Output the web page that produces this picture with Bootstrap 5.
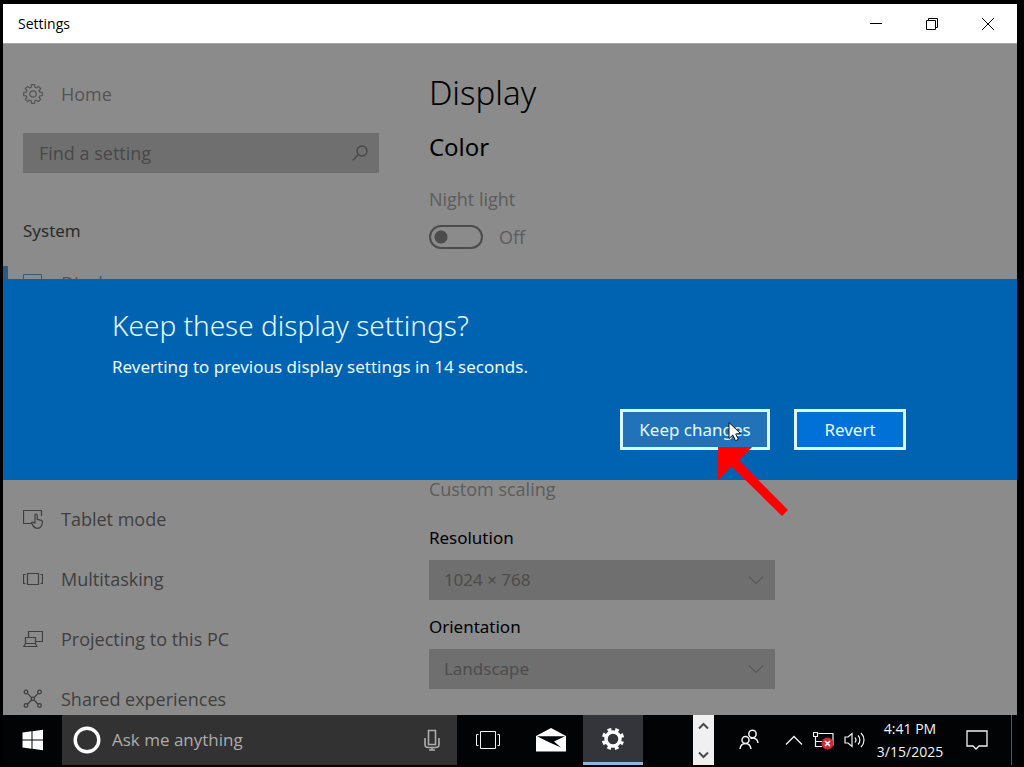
<!DOCTYPE html>
<html lang="en">
<head>
<meta charset="utf-8">
<meta name="viewport" content="width=device-width, initial-scale=1">
<title>Settings</title>
<link href="https://cdn.jsdelivr.net/npm/bootstrap@5.3.0/dist/css/bootstrap.min.css" rel="stylesheet">
<style>
  body { background: #000; color: #2b2b2b; font-family: "Noto Sans", "Open Sans", sans-serif; font-size: 17px; line-height: 24px; }
  .desktop { padding: 4px 7px 2px 3px; }
  svg { display: block; fill: none; stroke: currentColor; flex: none; }
  svg.solid { stroke: none; }
  button { border: 0; background: none; color: inherit; padding: 0; }

  .titlebar { height: 39px; padding: 0 1px 0 15px; background: #fff; color: #000; font-size: 14px; font-family: "Open Sans", sans-serif; }
  .titlebar button { width: 56px; height: 39px; display: grid; place-items: center; }

  .pane-area { background: #8b8b8b; border-top: 1px solid #a8a8a8; min-height: 0; }
  .sidebar { flex: 0 0 42%; padding: 34px 50px 0 20px; }
  .side-link, .find-box, .dimmed { font-family: "Open Sans", sans-serif; font-size: 18px; }
  .side-link { display: flex; align-items: center; gap: 18px; height: 60px; color: #3f3f3f; text-decoration: none; }
  .home-link { height: 32px; color: #545454; }
  .find-box { margin-top: 23px; background: #6f6f6f; height: 40px; padding: 0 11px 0 16px; color: #484848; }
  .bare-input { border: 0; background: none; padding: 0; color: inherit; min-width: 0; outline: 0; }
  .bare-input::placeholder { color: inherit; opacity: 1; }
  .group-title { margin: 46px 0 0; font-size: 17px; line-height: 24px; font-weight: 400; color: #2b2b2b; }
  .current-link { margin: 10px 0 0 -20px; padding-left: 20px; position: relative; color: #2f5a80; }
  .current-link::before { content: ""; position: absolute; left: 0; top: 13px; width: 5px; height: 34px; background: #2f5a80; }
  .lower-links { margin-top: 176px; }

  .content-pane { padding-top: 26px; }
  .content-pane h1 { font-size: 33px; line-height: 46px; font-weight: 300; color: #000; margin: 0; }
  .content-pane h2 { font-size: 24px; line-height: 32px; font-weight: 400; color: #000; margin: 15px 0 24px; }
  .dimmed { color: #5c5c5c; }
  .switch-row { margin: 13px 0 0; }
  .night-switch.form-check-input { width: 54px; height: 24px; margin: 0; border: 2px solid #4c4c4c; border-radius: 12px; opacity: 1;
    background: radial-gradient(circle at 10px 10px, #4c4c4c 6px, transparent 7px); }
  .scaling-link { display: block; margin-top: 228px; text-decoration: none; }
  .field-label { display: block; color: #000; line-height: 24px; margin-bottom: 10px; }
  .field { width: 346px; max-width: 100%; margin-top: 25px; }
  .field + .field { margin-top: 15px; }
  .field .form-select { height: 40px; border: 0; border-radius: 0; padding: 0 40px 0 15px; font-size: 17px; color: #4c4c4c; background-color: #6f6f6f; opacity: 1;
    background-image: url("data:image/svg+xml,%3Csvg xmlns='http://www.w3.org/2000/svg' viewBox='0 0 16 16'%3E%3Cpath d='M1 4.500l7 7 7-7' fill='none' stroke='%23484848'/%3E%3C/svg%3E");
    background-size: 16px 16px; background-position: right 11px center; }

  .dialog-layer { inset: 0; }
  .confirm-band { background: #0063b1; color: #e6fbff; min-height: 201px; padding: 28px 111px 30px 109px; }
  .confirm-band h2 { font-size: 28px; line-height: 36px; font-weight: 300; margin: 0 0 12px; }
  .choice-row { margin-top: 30px; }
  .choice { display: block; height: 41px; border: 3px solid #dcf8ff; border-radius: 0; color: #e6fbff; font-size: 17px; line-height: 24px; padding: 0; }
  .choice:hover, .choice:focus { border-color: #dcf8ff; color: #fff; }
  .choice-keep { width: 150px; background: #2272b9; }
  .choice-revert { width: 112px; background: #0071d6; }
  .pointer-art { left: 98px; top: 12px; pointer-events: none; z-index: 2; }

  .taskbar { height: 50px; background: #020305; color: #f2f2f2; font-family: "Open Sans", sans-serif; }
  .taskbar > button { height: 50px; display: grid; place-items: center; }
  .ask-box { flex: 0 0 39%; background: #323232; color: #adadad; padding: 0 16px 0 10px; }
  .ask-box .bare-input { margin-left: 10px; }
  .app-active { width: 60px; background: #33353a; border-bottom: 3px solid #8fb5dd; }
  .mini-scroll { width: 21px; background: #f0f0f0; color: #4a4a4a; padding: 7px 0 6px; }
  .clock { font-size: 14px; line-height: 23px; width: 80px; }
  .show-desk { width: 6px; margin-left: 11px; border-left: 1px solid #55585c; }
  .w-start { width: 59px; } .w-view { width: 62px; } .w-mail { width: 64px; } .w-people { width: 70px; }
  .w-more { width: 20px; } .w-net { width: 40px; } .w-vol { width: 22px; } .w-note { width: 46px; }
</style>
</head>
<body>
<div class="desktop vh-100 d-flex flex-column overflow-hidden">
  <header class="titlebar d-flex align-items-center">
    <span class="me-auto">Settings</span>
    <button type="button" aria-label="Minimize"><svg width="14" height="14" viewBox="0 0 14 14"><path d="M1 6.500h12"/></svg></button>
    <button type="button" aria-label="Restore"><svg width="14" height="14" viewBox="0 0 14 14"><path d="M1.500 3.500h9v9h-9zM3.500 3.500v-2h9v9h-2"/></svg></button>
    <button type="button" aria-label="Close"><svg width="14" height="14" viewBox="0 0 14 14"><path d="M1 1l12 12M13 1L1 13"/></svg></button>
  </header>

  <div class="pane-area flex-grow-1 d-flex position-relative overflow-hidden">
    <nav class="sidebar" aria-label="Settings categories">
      <a class="side-link home-link" href="#">
        <svg width="20" height="20" viewBox="0 0 20 20" stroke-width="1.200" stroke-linejoin="round"><circle cx="10" cy="10" r="3.200"/><path d="M8.200 3.200 8.400.7h3.200l.2 2.500 1.700.7 1.900-1.600 2.300 2.300-1.600 1.900.7 1.700 2.500.2v3.200l-2.500.2-.7 1.700 1.600 1.900-2.300 2.300-1.900-1.600-1.700.7-.2 2.500H8.400l-.2-2.500-1.700-.7-1.900 1.600-2.300-2.300 1.600-1.900-.7-1.700-2.500-.2V8.400l2.500-.2.7-1.700-1.600-1.900 2.300-2.300 1.900 1.600z"/></svg>
        Home</a>
      <div class="find-box d-flex align-items-center">
        <input class="bare-input flex-grow-1" type="text" placeholder="Find a setting" aria-label="Find a setting">
        <svg width="16" height="16" viewBox="0 0 16 16" stroke-width="1.400"><circle cx="10" cy="6" r="5"/><path d="M6.400 9.600.8 15.200"/></svg>
      </div>
      <h2 class="group-title">System</h2>
      <a class="side-link current-link" href="#" aria-current="page">
        <svg width="20" height="20" viewBox="0 0 20 20"><path d="M.5 1.500h18v12H.5zM9.500 13.500v4M5 17.500h9"/></svg>
        Display</a>
      <div class="lower-links">
        <a class="side-link" href="#">
          <svg width="20" height="20" viewBox="0 0 20 20" stroke-width="1.200"><path d="M8.500 14.500h-8v-13h18v5.500M12 14V6.200c0-1.600 2.200-1.600 2.200 0v4.200l3.600.7c1.200.3 1.700 1 1.600 2.200-.2 3-1 6-5 6-2.600 0-3.600-1.200-4.800-3.400l-1.200-2c.7-1 1.700-.8 2.400-.2z"/></svg>
          Tablet mode</a>
        <a class="side-link" href="#">
          <svg width="20" height="20" viewBox="0 0 20 20" stroke-width="1.200"><path d="M4.500 4.500h11v11h-11zM2.500 5.500h-2v9h2M17.500 5.500h2v9h-2"/></svg>
          Multitasking</a>
        <a class="side-link" href="#">
          <svg width="20" height="20" viewBox="0 0 20 20" stroke-width="1.200"><path d="M5.500 8V2.500h14v10h-7M2.500 15V8.500h10V15M2.500 14.500.8 17.500h13l-1.500-3z"/></svg>
          Projecting to this PC</a>
        <a class="side-link" href="#">
          <svg width="20" height="20" viewBox="0 0 20 20" stroke-width="1.300"><circle cx="3" cy="3" r="1.800"/><circle cx="16.500" cy="3" r="1.800"/><circle cx="3" cy="16.500" r="1.800"/><circle cx="16.500" cy="16.500" r="1.800"/><circle cx="9.800" cy="9.800" r="1.600"/><path d="M4.400 4.400l4.200 4.200M15.200 4.400 11 8.600M4.400 15.200l4.200-4.200M15.200 15.200 11 11"/></svg>
          Shared experiences</a>
      </div>
    </nav>

    <main class="content-pane flex-grow-1">
      <h1>Display</h1>
      <h2>Color</h2>
      <label class="dimmed" for="night">Night light</label>
      <div class="switch-row d-flex align-items-center gap-3 dimmed">
        <input class="form-check-input night-switch" type="checkbox" role="switch" id="night" disabled>
        <span>Off</span>
      </div>
      <a class="scaling-link dimmed" href="#">Custom scaling</a>
      <div class="field">
        <label class="field-label" for="res">Resolution</label>
        <select class="form-select" id="res" disabled><option>1024 × 768</option></select>
      </div>
      <div class="field">
        <label class="field-label" for="orient">Orientation</label>
        <select class="form-select" id="orient" disabled><option>Landscape</option></select>
      </div>
    </main>

    <div class="dialog-layer position-absolute d-flex align-items-center">
      <section class="confirm-band w-100" role="dialog" aria-labelledby="confirm-title">
        <h2 id="confirm-title">Keep these display settings?</h2>
        <p class="m-0">Reverting to previous display settings in 14 seconds.</p>
        <div class="choice-row d-flex justify-content-end gap-4">
          <div class="position-relative">
            <button type="button" class="btn choice choice-keep">Keep changes</button>
            <svg class="solid pointer-art position-absolute" width="72" height="96" viewBox="0 0 72 96" aria-hidden="true">
              <path fill="#fff" stroke="#111" d="M11 1.500v16l3.800-3.400 2.700 5.600 2.900-1.400-2.700-5.300 4.900-.4z"/>
              <path fill="#f00" d="M0 26h34L21 39.500l49 49.500-6 6-50.500-49.500L0 59z"/>
            </svg>
          </div>
          <button type="button" class="btn choice choice-revert">Revert</button>
        </div>
      </section>
    </div>
  </div>

  <footer class="taskbar d-flex align-items-stretch">
    <button type="button" class="w-start" aria-label="Start"><svg class="solid" width="22" height="22" viewBox="0 0 22 22"><path fill="#fff" d="M.5 3.500l9-1.200v8.200h-9zM10.500 2.200 21 .8v9.700H10.500zM.5 11.500h9v8.200l-9-1.200zM10.500 11.500H21v9.700l-10.500-1.400z"/></svg></button>
    <div class="ask-box d-flex align-items-center">
      <svg width="30" height="30" viewBox="0 0 30 30"><circle cx="15" cy="15" r="11.800" stroke="#fff" stroke-width="3.400"/></svg>
      <input class="bare-input flex-grow-1" type="text" placeholder="Ask me anything" aria-label="Ask me anything">
      <svg width="18" height="22" viewBox="0 0 18 22" stroke-width="1.600"><path d="M5.500 1.500h7v14h-7zM2 9v6.500c0 2 1.500 3 3.500 3h7c2 0 3.500-1 3.500-3V9M9 18.500v2.500M6 21h6"/></svg>
    </div>
    <button type="button" class="w-view" aria-label="Task view"><svg width="24" height="20" viewBox="0 0 24 20"><path d="M4.500 1.500h15v17h-15zM2.500 4.500h-2v11h2M21.500 4.500h2v11h-2"/></svg></button>
    <button type="button" class="w-mail" aria-label="Mail"><svg class="solid" width="30" height="24" viewBox="0 0 30 24"><path fill="#fff" d="M0 8 15 0l15 8v15.500H0z"/><path fill="#020305" d="M1 8.200h28L18 13.500l7 6L12.500 14z"/></svg></button>
    <button type="button" class="app-active" aria-label="Settings"><svg width="24" height="24" viewBox="0 0 24 24"><circle cx="12" cy="12" r="7" stroke="#fff" stroke-width="3.400"/><circle cx="12" cy="12" r="9.600" stroke="#fff" stroke-width="3.200" stroke-dasharray="3.800 3.740" stroke-dashoffset="1.900" transform="rotate(22.500 12 12)"/></svg></button>
    <div class="mini-scroll ms-auto d-flex flex-column align-items-center justify-content-between">
      <svg width="11" height="8" viewBox="0 0 11 8" stroke-width="2"><path d="M1 6.500l4.500-4.500L10 6.500"/></svg>
      <svg width="11" height="8" viewBox="0 0 11 8" stroke-width="2"><path d="M1 1.500 5.500 6 10 1.500"/></svg>
    </div>
    <button type="button" class="w-people" aria-label="People"><svg width="20" height="22" viewBox="0 0 20 22" stroke-width="1.500"><circle cx="13.500" cy="5" r="3.700"/><circle cx="6.500" cy="11" r="3.500"/><path d="M1 20c.4-3.500 2.500-5.500 5.500-5.500s5 2 5.500 5.500M11.500 9.700c1-.8 6.500-2 7.500 4.300"/></svg></button>
    <button type="button" class="w-more" aria-label="Show hidden icons"><svg width="18" height="12" viewBox="0 0 18 12" stroke-width="1.400"><path d="M1 10.500l8-8 8 8"/></svg></button>
    <button type="button" class="w-net" aria-label="Network"><svg width="22" height="20" viewBox="0 0 22 20" stroke-width="1.200"><path d="M5.500 3.500H20v12M.5 2.500h4v4h-4zM2.500 6.500v10H9M2.500 11.500H9"/><g stroke="none"><circle cx="14.500" cy="13.500" r="6" fill="#c92c36"/></g><path stroke="#fff" stroke-width="1.500" d="M12 11l5 5M17 11l-5 5"/></svg></button>
    <button type="button" class="w-vol" aria-label="Volume"><svg width="22" height="18" viewBox="0 0 22 18" stroke-width="1.200"><path d="M1 6h3l4-3.500v13L4 12H1zM11 6.500c1.200 1.500 1.200 3.500 0 5M14 4.500c2.500 2.500 2.500 6.500 0 9M17 2c4 4 4 10 0 14"/></svg></button>
    <div class="clock text-center align-self-center mx-1">4:41 PM<br>3/15/2025</div>
    <button type="button" class="w-note" aria-label="Notifications"><svg width="22" height="20" viewBox="0 0 22 20" stroke-width="1.300"><path d="M1 1h20v15h-8l-3 3-3-3H1z"/></svg></button>
    <div class="show-desk"></div>
  </footer>
</div>
<script src="https://cdn.jsdelivr.net/npm/bootstrap@5.3.0/dist/js/bootstrap.bundle.min.js"></script>
</body>
</html>
